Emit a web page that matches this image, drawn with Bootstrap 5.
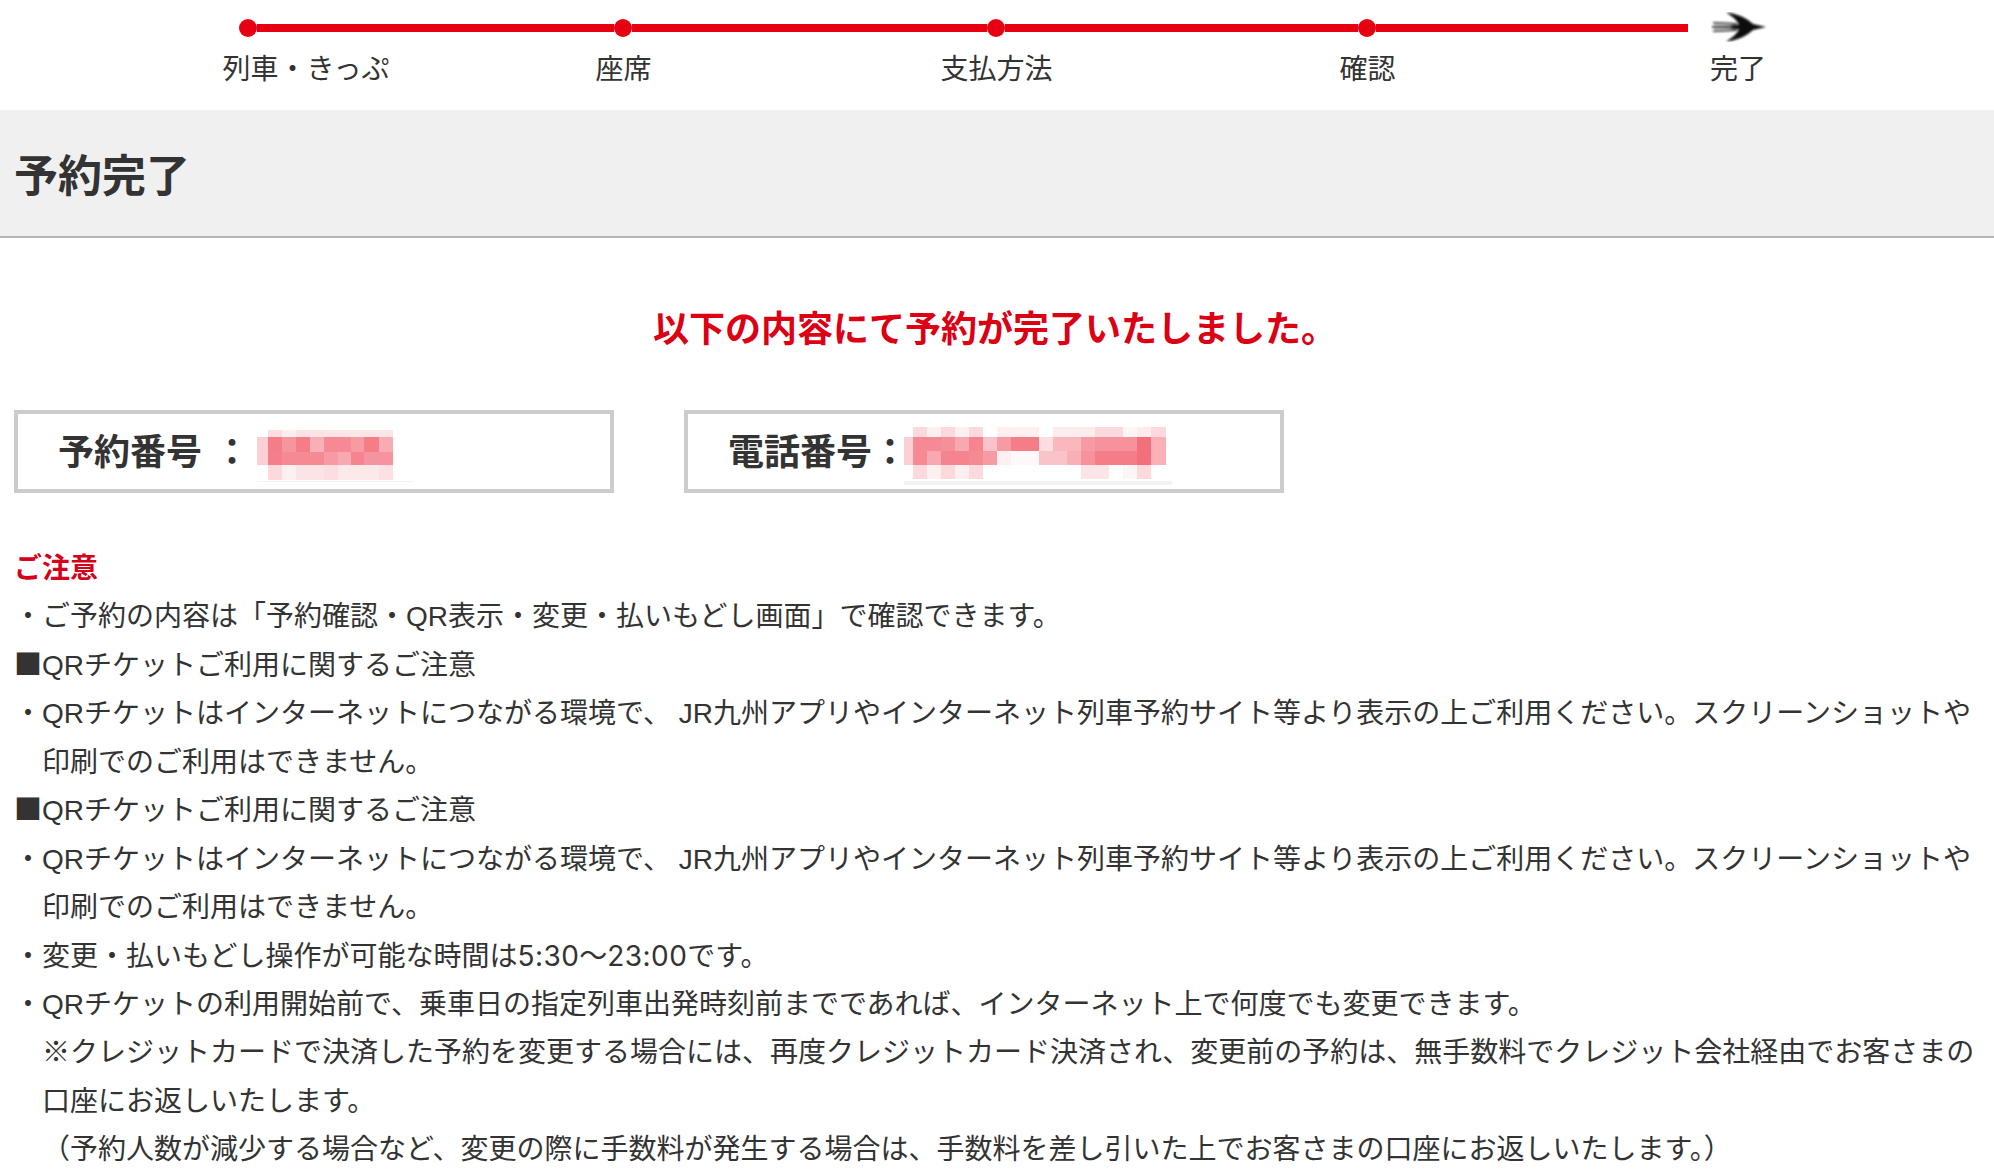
<!DOCTYPE html>
<html lang="ja">
<head>
<meta charset="utf-8">
<title>予約完了</title>
<link href="https://cdn.jsdelivr.net/npm/bootstrap@5.3.0/dist/css/bootstrap.min.css" rel="stylesheet">
<style>
html,body{height:1170px;overflow:hidden;background:#fff}
body{font-family:"Liberation Sans","Noto Sans CJK JP",sans-serif;color:#333;font-size:28px;line-height:48.44px}
.flow-wrap{height:110px;padding-top:19px}
.flow-track{display:flex;align-items:center;height:18px;margin-left:239px}
.flow-dot{width:18px;height:18px;border-radius:50%;background:#e60012;flex:none}
.flow-seg{height:8px;background:#e60012;flex:none}
.seg-a{width:357px}.seg-b{width:355px}.seg-c{width:353px}.seg-d{width:312px}
.flow-arrow{flex:none;margin-left:23px;margin-top:-2px}
.flow-labels{display:grid;grid-template-columns:168px 467px 279px 463px 278px;margin:10px 0 0 222px;line-height:40px;font-size:28px;text-align:center;white-space:nowrap;font-family:"Noto Sans CJK JP",sans-serif}
.page-head{height:128px;background:#f0f0f0;border-bottom:2px solid #b5b5b5;padding-left:14px}
.page-head h1{font-size:44px;font-weight:700;line-height:126px;margin:0;color:#333;font-family:"Noto Sans CJK JP",sans-serif}
.done-msg{font-size:36px;font-weight:700;color:#dc0014;line-height:50px;margin:63px 0 0;width:1990px;text-align:center;font-family:"Noto Sans CJK JP",sans-serif}
.num-row{margin:59px 0 0 14px;gap:70px}
.num-box{width:600px;height:83px;border:4px solid #ccc;padding-left:40px;font-size:36px;font-weight:700;line-height:70px;display:flex;white-space:nowrap;font-family:"Noto Sans CJK JP",sans-serif}
.colon-a{margin-left:12px}
.colon-b{width:32px}
.mosaic{display:block;flex:none}
.mosaic-a{margin-left:7px}
.notes{margin:52px 0 0;padding:0 14px;list-style:none}
.notes .note-title{color:#d7001a;font-weight:700}
.notes li{white-space:nowrap}
.notes li.dot{padding-left:28px;text-indent:-28px;white-space:normal}
.notes .ind{padding-left:28px;white-space:normal}
.sq{font-family:"Noto Sans CJK JP",sans-serif;line-height:1}
.tm{font-family:Inter,sans-serif;line-height:1;letter-spacing:.45px}
</style>
</head>
<body>
<div class="flow-wrap">
  <div class="flow-track">
    <span class="flow-dot"></span><span class="flow-seg seg-a"></span>
    <span class="flow-dot"></span><span class="flow-seg seg-b"></span>
    <span class="flow-dot"></span><span class="flow-seg seg-c"></span>
    <span class="flow-dot"></span><span class="flow-seg seg-d"></span>
    <svg class="flow-arrow" width="56" height="30" viewBox="0 0 56 30">
      <defs><filter id="soft" x="-10%" y="-10%" width="120%" height="120%"><feGaussianBlur stdDeviation=".8"/></filter></defs>
      <g filter="url(#soft)">
        <path d="M3 10 L26 11 L26 19 L3 20 Z" fill="#c4c4c4"/>
        <path d="M2 10 L26 11 L26 12.5 L2 11.5 Z M1 14 L28 13.5 L28 16.5 L1 16 Z M2 18.5 L26 17.5 L26 19 L2 20 Z" fill="#333"/>
        <path d="M15 .5 C27 1.5 36 6.5 42 12 L55 15 L42 18 C36 23.5 27 28.5 15 29.5 C21 26 26 21.5 28 17.5 L20 17 L20 13 L28 12.5 C26 8.5 21 4 15 .5 Z" fill="#0a0a0a"/>
      </g>
    </svg>
  </div>
  <div class="flow-labels"><span>列車・きっぷ</span><span>座席</span><span>支払方法</span><span>確認</span><span>完了</span></div>
</div>
<div class="page-head"><h1>予約完了</h1></div>
<p class="done-msg">以下の内容にて予約が完了いたしました。</p>
<div class="d-flex num-row">
  <div class="num-box"><span>予約番号</span><span class="colon-a">：</span>
    <svg class="mosaic mosaic-a" width="160" height="75" viewBox="0 0 160 75">
      <defs><filter id="mb" x="-5%" y="-5%" width="110%" height="110%"><feGaussianBlur stdDeviation=".5"/></filter></defs>
      <g filter="url(#mb)">
        <rect x="11" y="16" width="14" height="7" fill="#fcdde0"/><rect x="25" y="16" width="14" height="7" fill="#fdeff0"/><rect x="39" y="16" width="28" height="7" fill="#fce3e5"/><rect x="67" y="16" width="69" height="7" fill="#fde6e8"/>
        <rect x="0" y="23" width="11" height="28" fill="#fad0d4"/>
        <rect x="11" y="23" width="14" height="15" fill="#f47d88"/><rect x="25" y="23" width="14" height="15" fill="#f5969f"/><rect x="39" y="23" width="14" height="15" fill="#f47d88"/><rect x="53" y="23" width="14" height="15" fill="#f8b0b6"/><rect x="67" y="23" width="27" height="15" fill="#f58a94"/><rect x="94" y="23" width="13" height="15" fill="#f69ba3"/><rect x="107" y="23" width="15" height="15" fill="#f47d88"/><rect x="122" y="23" width="14" height="15" fill="#f8acb2"/>
        <rect x="11" y="38" width="14" height="13" fill="#f47f8a"/><rect x="25" y="38" width="42" height="13" fill="#f58a94"/><rect x="67" y="38" width="14" height="13" fill="#f69ba3"/><rect x="81" y="38" width="13" height="13" fill="#f8a8b0"/><rect x="94" y="38" width="13" height="13" fill="#f58490"/><rect x="107" y="38" width="29" height="13" fill="#f693a0"/>
        <rect x="11" y="51" width="14" height="15" fill="#fcd9dc"/><rect x="25" y="51" width="14" height="15" fill="#fef0f1"/><rect x="39" y="51" width="28" height="15" fill="#fce3e5"/><rect x="67" y="51" width="14" height="15" fill="#fcdde0"/><rect x="81" y="51" width="41" height="15" fill="#fde9ea"/><rect x="122" y="51" width="14" height="15" fill="#fde0e3"/>
        <rect x="0" y="67" width="156" height="1" fill="#f2f2f2"/>
      </g>
    </svg>
  </div>
  <div class="num-box"><span>電話番号</span><span class="colon-b">：</span>
    <svg class="mosaic" width="272" height="75" viewBox="0 0 272 75">
      <g filter="url(#mb)">
        <rect x="9" y="13" width="14" height="10" fill="#fcd9dc"/><rect x="23" y="13" width="14" height="10" fill="#fef0f1"/><rect x="37" y="13" width="14" height="10" fill="#fcd9dc"/><rect x="51" y="13" width="14" height="10" fill="#fef0f1"/><rect x="65" y="13" width="14" height="10" fill="#fcd9dc"/><rect x="93" y="13" width="42" height="10" fill="#fef0f1"/><rect x="149" y="13" width="42" height="10" fill="#fdeced"/><rect x="191" y="13" width="28" height="10" fill="#fcd9dc"/><rect x="219" y="13" width="14" height="10" fill="#fef5f5"/><rect x="233" y="13" width="14" height="10" fill="#fdeced"/><rect x="247" y="13" width="15" height="10" fill="#fcd9dc"/>
        <rect x="0" y="23" width="9" height="28" fill="#fad0d4"/>
        <rect x="9" y="23" width="28" height="14" fill="#f58a94"/><rect x="37" y="23" width="14" height="14" fill="#f58f99"/><rect x="51" y="23" width="14" height="14" fill="#f8a8b0"/><rect x="65" y="23" width="14" height="14" fill="#f5848f"/><rect x="79" y="23" width="14" height="14" fill="#f9c4c9"/><rect x="93" y="23" width="14" height="14" fill="#f69ba3"/><rect x="107" y="23" width="28" height="14" fill="#f47d88"/><rect x="135" y="23" width="14" height="14" fill="#fcdde0"/><rect x="149" y="23" width="28" height="14" fill="#fab8be"/><rect x="177" y="23" width="14" height="14" fill="#f69ba3"/><rect x="191" y="23" width="42" height="14" fill="#f6929c"/><rect x="233" y="23" width="14" height="14" fill="#f26f7b"/><rect x="247" y="23" width="15" height="14" fill="#f9b0b6"/>
        <rect x="9" y="37" width="14" height="14" fill="#f58a94"/><rect x="23" y="37" width="14" height="14" fill="#f8a8b0"/><rect x="37" y="37" width="28" height="14" fill="#f5848f"/><rect x="65" y="37" width="14" height="14" fill="#f58a94"/><rect x="79" y="37" width="14" height="14" fill="#f69ba3"/><rect x="93" y="37" width="14" height="14" fill="#fef0f1"/><rect x="107" y="37" width="28" height="14" fill="#fff8f8"/><rect x="135" y="37" width="28" height="14" fill="#f9c4c9"/><rect x="163" y="37" width="14" height="14" fill="#f8b0b6"/><rect x="177" y="37" width="14" height="14" fill="#f6929c"/><rect x="191" y="37" width="42" height="14" fill="#f47d88"/><rect x="233" y="37" width="14" height="14" fill="#f26f7b"/><rect x="247" y="37" width="15" height="14" fill="#f9b0b6"/>
        <rect x="9" y="51" width="14" height="14" fill="#fcd9dc"/><rect x="23" y="51" width="14" height="14" fill="#fef0f1"/><rect x="37" y="51" width="14" height="14" fill="#fcd9dc"/><rect x="51" y="51" width="14" height="14" fill="#fef0f1"/><rect x="65" y="51" width="14" height="14" fill="#fcd9dc"/><rect x="177" y="51" width="28" height="14" fill="#fde5e7"/><rect x="219" y="51" width="14" height="14" fill="#fef5f5"/><rect x="233" y="51" width="14" height="14" fill="#fcd9dc"/>
        <rect x="0" y="67" width="268" height="4" fill="#f2f2f2"/>
      </g>
    </svg>
  </div>
</div>
<ul class="notes">
  <li class="note-title">ご注意</li>
  <li class="dot">・ご予約の内容は「予約確認・QR表示・変更・払いもどし画面」で確認できます。</li>
  <li><span class="sq">■</span>QRチケットご利用に関するご注意</li>
  <li class="dot">・QRチケットはインターネットにつながる環境で、 JR九州アプリやインターネット列車予約サイト等より表示の上ご利用ください。スクリーンショットや印刷でのご利用はできません。</li>
  <li><span class="sq">■</span>QRチケットご利用に関するご注意</li>
  <li class="dot">・QRチケットはインターネットにつながる環境で、 JR九州アプリやインターネット列車予約サイト等より表示の上ご利用ください。スクリーンショットや印刷でのご利用はできません。</li>
  <li class="dot">・変更・払いもどし操作が可能な時間は<span class="tm">5:30</span>〜<span class="tm">23:00</span>です。</li>
  <li class="dot">・QRチケットの利用開始前で、乗車日の指定列車出発時刻前までであれば、インターネット上で何度でも変更できます。</li>
  <li class="ind">※クレジットカードで決済した予約を変更する場合には、再度クレジットカード決済され、変更前の予約は、無手数料でクレジット会社経由でお客さまの口座にお返しいたします。</li>
  <li class="ind">（予約人数が減少する場合など、変更の際に手数料が発生する場合は、手数料を差し引いた上でお客さまの口座にお返しいたします。）</li>
</ul>
<script src="https://cdn.jsdelivr.net/npm/bootstrap@5.3.0/dist/js/bootstrap.bundle.min.js"></script>
</body>
</html>
